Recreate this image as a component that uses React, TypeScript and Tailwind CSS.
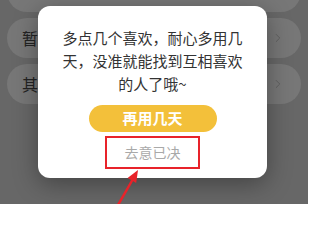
import { ChevronRight } from 'lucide-react'

const rows = ['', '暂时不想用了', '其他原因']

export default function App() {
  return (
    <div
      className="relative w-[308px] h-[204px] overflow-hidden bg-[#676767]"
      style={{ fontFamily: '"Noto Sans CJK SC", "Noto Sans", sans-serif' }}
    >
      {/* dimmed list behind the dialog */}
      <div className="flex flex-col gap-[6px] px-[7px] -mt-[28px]">
        {rows.map((r, i) => (
          <div key={i} className="flex h-[40px] items-center justify-between rounded-full bg-[#777777] pl-[15px] pr-[16px]">
            <span className="text-[16px] text-[#232323]">{r}</span>
            <ChevronRight className="w-[14px] h-[14px] text-[#5c5c5c]" strokeWidth={1.5} />
          </div>
        ))}
      </div>

      {/* dialog */}
      <div className="absolute left-[38px] top-[6px] w-[229px] rounded-[12px] bg-white pt-[20px] pb-[9px] shadow-[0_6px_24px_rgba(0,0,0,0.35)]">
        <p className="mx-auto w-[182px] text-center text-[15px] leading-[23px] text-[#333333]">
          多点几个喜欢，耐心多用几天，没准就能找到互相喜欢的人了哦~
        </p>
        <div className="mt-[10px] flex flex-col items-center">
          <button className="h-[27px] w-[128px] rounded-full bg-[#f3c03a] text-[15px] font-semibold text-white">
            再用几天
          </button>
          <button className="mt-[4px] h-[33px] w-[95px] border-2 border-[#e8232a] text-[14px] text-[#a9a9a9]">
            去意已决
          </button>
        </div>
      </div>

      {/* annotation arrow */}
      <svg className="absolute left-0 top-0" width="308" height="204" viewBox="0 0 308 204">
        <line x1="118" y1="205" x2="133" y2="179" stroke="#e8232a" strokeWidth="2.5" />
        <polygon points="138,170 127.6,177.9 136.2,182.9" fill="#e8232a" />
      </svg>
    </div>
  )
}
